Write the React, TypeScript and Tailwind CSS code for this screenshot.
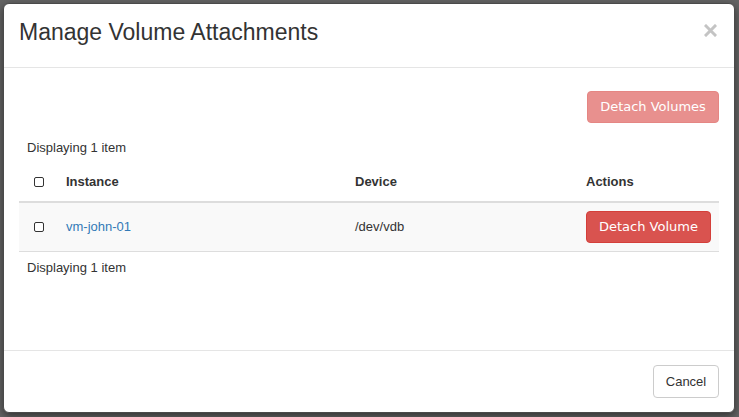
import React from "react";

const Box = () => (
  <span className="inline-block w-[10px] h-[10px] rounded-[2px] border border-[#333] bg-white" />
);

export default function App() {
  return (
    <div className="w-[739px] h-[417px] bg-[#646464] pt-[3px] pl-[3px] overflow-hidden" style={{ fontFamily: '"Liberation Sans", Arial, sans-serif' }}>
      <div className="w-[732px] h-[410px] bg-white border border-[#4a4a4a] rounded-[6px] flex flex-col shadow-[0_3px_9px_rgba(0,0,0,0.5)]">
        <div className="h-[64px] border-b border-[#e5e5e5] flex items-center justify-between pl-[15px] pr-[17px] shrink-0">
          <h4 className="text-[23px] text-[#333] leading-none -mt-[6px]">Manage Volume Attachments</h4>
          <svg width="13" height="13" viewBox="0 0 13 13" className="-mt-[10px]">
            <path d="M2 2 L11 11 M11 2 L2 11" stroke="#c4c4c4" strokeWidth="3" strokeLinecap="square" />
          </svg>
        </div>
        <div className="flex-1 px-[15px] pt-[23px]">
          <div className="flex justify-end">
            <button className="h-[32px] w-[132px] rounded-[4px] bg-[#e8908e] border border-[#e58683] text-white text-[13px]" style={{ fontFamily: '"DejaVu Sans", sans-serif' }}>Detach Volumes</button>
          </div>
          <div className="text-[13px] text-[#333] mt-[15px] pl-[8px]">Displaying 1 item</div>
          <div className="mt-[5px]">
            <div className="flex items-center h-[40px] border-b-2 border-[#ddd] text-[13px] font-bold text-[#333]">
              <div className="w-[47px] pl-[15px] flex items-center"><Box /></div>
              <div className="w-[289px]">Instance</div>
              <div className="w-[231px]">Device</div>
              <div>Actions</div>
            </div>
            <div className="flex items-center h-[49px] bg-[#f9f9f9] border-b border-[#ddd] text-[13px] text-[#333]">
              <div className="w-[47px] pl-[15px] flex items-center"><Box /></div>
              <div className="w-[289px] text-[#337ab7]">vm-john-01</div>
              <div className="w-[231px]">/dev/vdb</div>
              <div>
                <button className="h-[32px] w-[125px] rounded-[4px] bg-[#d9534f] border border-[#d43f3a] text-white text-[13px]" style={{ fontFamily: '"DejaVu Sans", sans-serif' }}>Detach Volume</button>
              </div>
            </div>
          </div>
          <div className="text-[13px] text-[#333] mt-[6px] pl-[8px]">Displaying 1 item</div>
        </div>
        <div className="h-[62px] border-t border-[#e5e5e5] flex items-start justify-end pt-[14px] pr-[15px] shrink-0">
          <button className="h-[33px] w-[66px] rounded-[4px] border border-[#ccc] bg-white text-[#333] text-[13px]">Cancel</button>
        </div>
      </div>
    </div>
  );
}
